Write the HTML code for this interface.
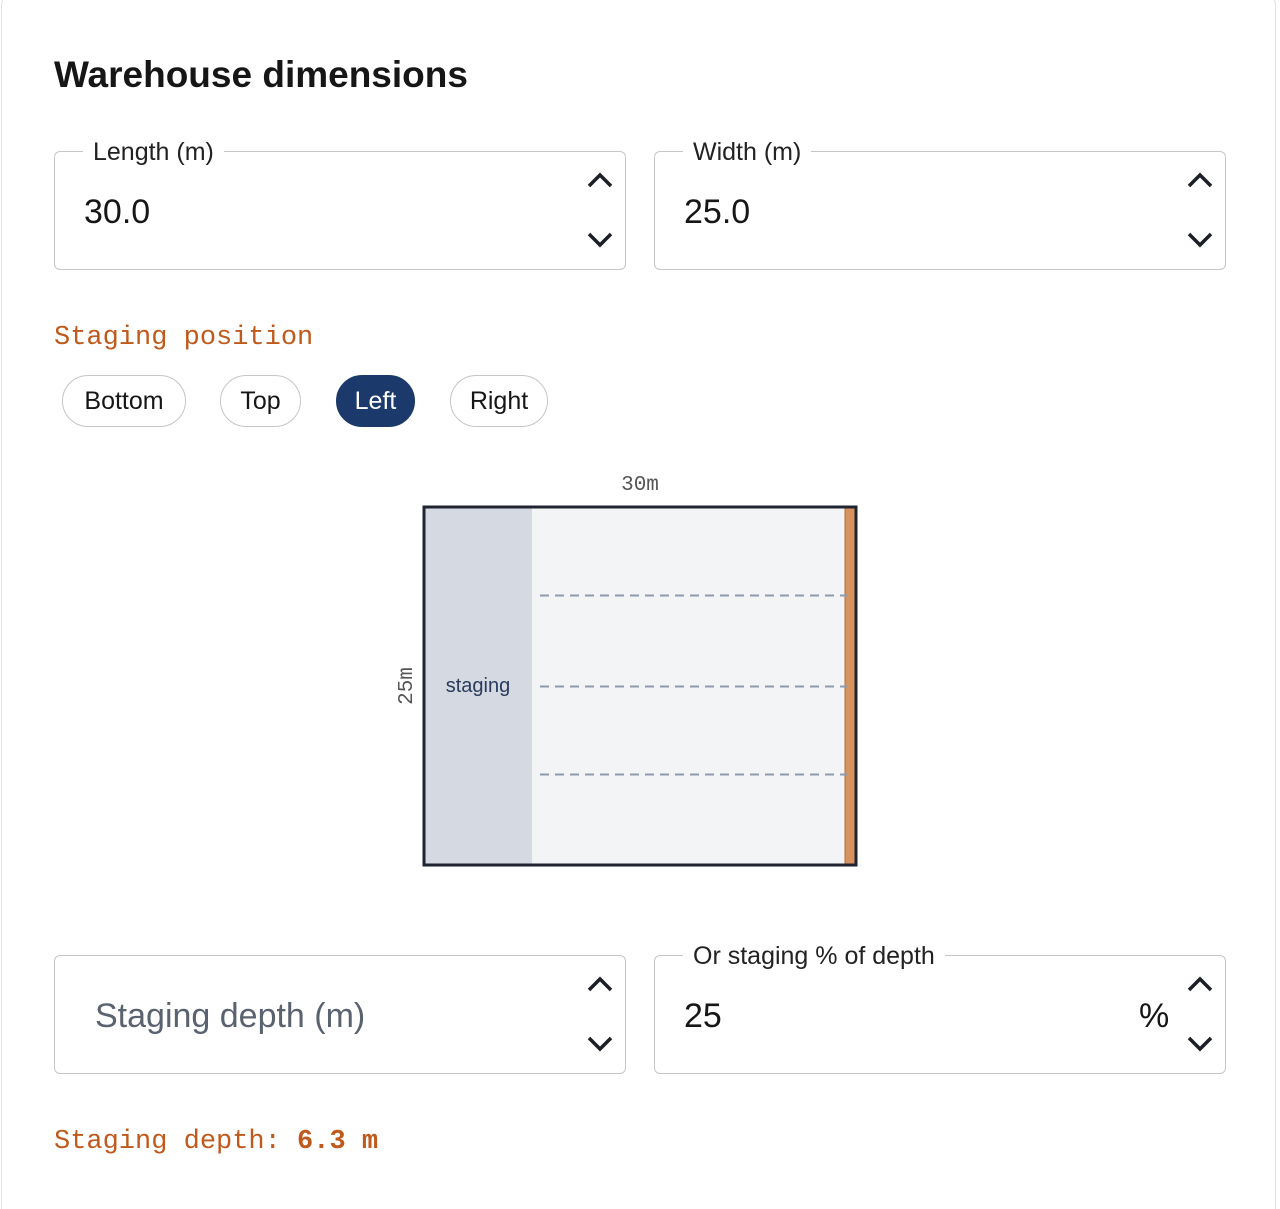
<!DOCTYPE html>
<html style="overflow:hidden;height:1209px"><head><meta charset="utf-8"><style>
body{margin:0;background:#fff;width:1280px;height:1209px;overflow:hidden;position:relative;font-family:"Liberation Sans",sans-serif;color:#161616}
.card{position:absolute;left:1px;top:-2px;width:1275px;height:1218px;border:1px solid #e3e3e3;border-bottom:none;border-radius:6px 6px 0 0;box-sizing:border-box}
.a{position:absolute;white-space:nowrap}
.inp{position:absolute;border:1.5px solid #c6c6c6;border-radius:6px;width:572px;height:119px;box-sizing:border-box}
.leg{position:absolute;top:-15px;left:28px;background:#fff;padding:0 10px;font-size:25px;color:#222;line-height:30px}
.val{position:absolute;left:29px;top:40px;font-size:34px;line-height:40px;color:#161616}
.chev{position:absolute;right:10px;width:30px}
.mono{font-family:"Liberation Mono",monospace;color:#c0591c;font-size:27px}
.pill{position:absolute;top:375px;height:52px;box-sizing:border-box;border:1.5px solid #c6c6c6;border-radius:26px;font-size:25px;line-height:50px;text-align:center;color:#161616}
</style></head><body>
<div class="card"></div>
<div class="a" style="left:54px;top:53px;font-size:37px;font-weight:bold;line-height:44px;color:#161616">Warehouse dimensions</div>

<div class="inp" style="left:54px;top:151px"><div class="leg">Length (m)</div><div class="val">30.0</div>
<svg class="chev" style="top:18px" width="30" height="20" viewBox="0 0 30 20"><path d="M4 16 L15 5 L26 16" fill="none" stroke="#1c1f26" stroke-width="3.5"/></svg>
<svg class="chev" style="top:78px" width="30" height="20" viewBox="0 0 30 20"><path d="M4 4 L15 15 L26 4" fill="none" stroke="#1c1f26" stroke-width="3.5"/></svg></div>
<div class="inp" style="left:654px;top:151px"><div class="leg">Width (m)</div><div class="val">25.0</div>
<svg class="chev" style="top:18px" width="30" height="20" viewBox="0 0 30 20"><path d="M4 16 L15 5 L26 16" fill="none" stroke="#1c1f26" stroke-width="3.5"/></svg>
<svg class="chev" style="top:78px" width="30" height="20" viewBox="0 0 30 20"><path d="M4 4 L15 15 L26 4" fill="none" stroke="#1c1f26" stroke-width="3.5"/></svg></div>

<div class="a mono" style="left:54px;top:322px;line-height:32px">Staging position</div>
<div class="pill" style="left:62px;width:124px">Bottom</div>
<div class="pill" style="left:220px;width:81px">Top</div>
<div class="pill" style="left:336px;width:79px;background:#1b3a6b;border-color:#1b3a6b;color:#fff">Left</div>
<div class="pill" style="left:450px;width:98px">Right</div>

<svg class="a" style="left:380px;top:460px" width="500" height="420" viewBox="380 460 500 420">
<text x="640" y="490" font-family="Liberation Mono,monospace" font-size="21" fill="#555" text-anchor="middle">30m</text>
<text x="0" y="0" transform="translate(412,686) rotate(-90)" font-family="Liberation Mono,monospace" font-size="21" fill="#555" text-anchor="middle">25m</text>
<rect x="424.5" y="507.5" width="431" height="357" fill="#f3f4f6"/>
<rect x="425" y="508" width="107" height="356" fill="#d4d9e2"/>
<rect x="845" y="508" width="10" height="356" fill="#d6935f" stroke="#b86e3a" stroke-width="1"/>
<text x="478" y="692" font-family="Liberation Sans,sans-serif" font-size="20" fill="#2a3b5c" text-anchor="middle">staging</text>
<g stroke="#8e9aae" stroke-width="2" stroke-dasharray="9 6">
<line x1="540" y1="595.5" x2="847" y2="595.5"/><line x1="540" y1="686.5" x2="847" y2="686.5"/><line x1="540" y1="774.5" x2="847" y2="774.5"/></g>
<rect x="424" y="507" width="432" height="358" fill="none" stroke="#1f2430" stroke-width="3"/>
</svg>

<div class="inp" style="left:54px;top:955px"><div class="val" style="left:40px;color:#5a6270">Staging depth (m)</div>
<svg class="chev" style="top:18px" width="30" height="20" viewBox="0 0 30 20"><path d="M4 16 L15 5 L26 16" fill="none" stroke="#1c1f26" stroke-width="3.5"/></svg>
<svg class="chev" style="top:78px" width="30" height="20" viewBox="0 0 30 20"><path d="M4 4 L15 15 L26 4" fill="none" stroke="#1c1f26" stroke-width="3.5"/></svg></div>
<div class="inp" style="left:654px;top:955px"><div class="leg">Or staging % of depth</div><div class="val">25</div><div class="val" style="left:484px">%</div>
<svg class="chev" style="top:18px" width="30" height="20" viewBox="0 0 30 20"><path d="M4 16 L15 5 L26 16" fill="none" stroke="#1c1f26" stroke-width="3.5"/></svg>
<svg class="chev" style="top:78px" width="30" height="20" viewBox="0 0 30 20"><path d="M4 4 L15 15 L26 4" fill="none" stroke="#1c1f26" stroke-width="3.5"/></svg></div>

<div class="a mono" style="left:54px;top:1126px;line-height:32px">Staging depth: <b>6.3 m</b></div>
</body></html>
